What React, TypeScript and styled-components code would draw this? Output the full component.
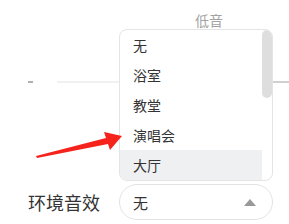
import styled, { createGlobalStyle } from 'styled-components';

const GlobalStyle = createGlobalStyle`
  * { box-sizing: border-box; }
  body {
    margin: 0;
    background: #fff;
    font-family: "Noto Sans CJK SC", "Noto Sans", sans-serif;
  }
`;

const Page = styled.div`
  position: relative;
  width: 289px;
  height: 224px;
  overflow: hidden;
  background: #fff;
`;

const BassLabel = styled.div`
  margin-left: 195px;
  padding-top: 11px;
  font-size: 14px;
  line-height: 18px;
  color: #a3a3a3;
`;

const SliderRow = styled.div`
  display: flex;
  align-items: center;
  margin-top: 52px;
  padding-left: 28px;
  height: 2px;
`;

const Tick = styled.span`
  width: 5px;
  height: 2px;
  background: #b0b0b0;
`;

const Track = styled.span`
  flex: 1;
  height: 2px;
  margin-left: 24px;
  background: linear-gradient(to right, #f0f0f0 0 216px, #d0d0d0 216px);
`;

const SettingRow = styled.div`
  display: flex;
  align-items: center;
  margin-top: 101px;
  padding-left: 28px;
  height: 36px;
`;

const SettingLabel = styled.span`
  width: 91px;
  font-size: 18px;
  color: #333;
`;

const SelectWrap = styled.div`
  position: relative;
  width: 154px;
`;

const SelectBox = styled.div`
  display: flex;
  align-items: center;
  justify-content: space-between;
  height: 36px;
  padding: 0 16px 0 13px;
  border: 1px solid #e3e3e3;
  border-radius: 18px;
  font-size: 15px;
  color: #333;
`;

const Caret = styled.span`
  width: 0;
  height: 0;
  border-left: 6px solid transparent;
  border-right: 6px solid transparent;
  border-bottom: 7px solid #999;
`;

const Menu = styled.div`
  position: absolute;
  left: 0;
  bottom: calc(100% + 3px);
  width: 154px;
  height: 152px;
  display: flex;
  border: 1px solid #e4e4e4;
  border-radius: 8px;
  background: #fff;
  overflow: hidden;
`;

const Options = styled.ul`
  flex: 1;
  margin: 0;
  padding: 0;
  list-style: none;
`;

const Option = styled.li<{ $hover?: boolean }>`
  height: 30px;
  line-height: 30px;
  padding-left: 13px;
  font-size: 14px;
  color: #333;
  background: ${({ $hover }) => ($hover ? '#eff0f2' : 'transparent')};
`;

const ScrollTrack = styled.div`
  width: 10px;
`;

const ScrollThumb = styled.div`
  height: 68px;
  border-radius: 5px;
  background: #dedede;
`;

const Pointer = styled.svg`
  position: absolute;
  left: 0;
  top: 0;
  pointer-events: none;
`;

const options = ['无', '浴室', '教堂', '演唱会', '大厅'];

export default function App() {
  return (
    <Page>
      <GlobalStyle />
      <BassLabel>低音</BassLabel>
      <SliderRow>
        <Tick />
        <Track />
      </SliderRow>
      <SettingRow>
        <SettingLabel>环境音效</SettingLabel>
        <SelectWrap>
          <Menu>
            <Options>
              {options.map((o) => (
                <Option key={o} $hover={o === '大厅'}>
                  {o}
                </Option>
              ))}
            </Options>
            <ScrollTrack>
              <ScrollThumb />
            </ScrollTrack>
          </Menu>
          <SelectBox>
            无
            <Caret />
          </SelectBox>
        </SelectWrap>
      </SettingRow>
      <Pointer width="289" height="224" viewBox="0 0 289 224">
        <polygon
          points="36,156 106,138 104,132 122,136 110,150 108,144 37,158"
          fill="#f5231c"
        />
      </Pointer>
    </Page>
  );
}
